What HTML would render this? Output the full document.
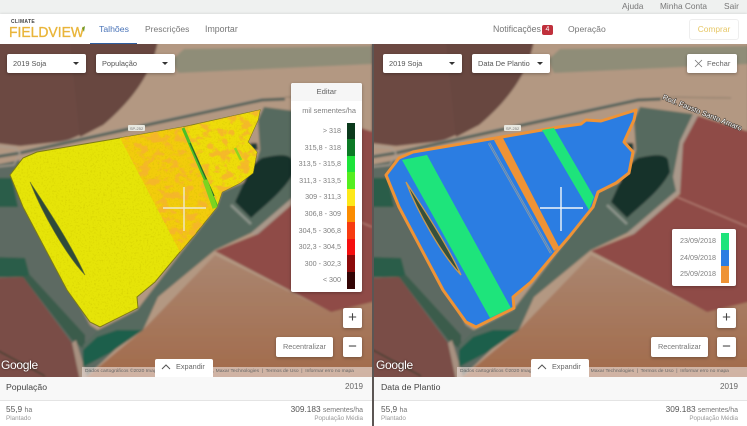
<!DOCTYPE html>
<html lang="pt"><head><meta charset="utf-8"><title>FieldView</title>
<style>
*{box-sizing:border-box}
html,body{margin:0;padding:0;width:747px;height:426px;overflow:hidden;background:#fff;font-family:"Liberation Sans",sans-serif;color:#666}
body{filter:blur(.3px)}
.a{position:absolute;white-space:nowrap}
.box{position:absolute;background:#fff;border-radius:2px;box-shadow:0 1px 3px rgba(0,0,0,.3)}
.sel{height:19px;top:54px;font-size:7.4px;line-height:19px;padding-left:6px;color:#555}
.sel i{position:absolute;right:7px;top:8px;width:0;height:0;border:3px solid transparent;border-top:3px solid #333;border-bottom:0}
.btn{text-align:center;color:#777;font-size:7.3px;line-height:20px;height:20px}
.pm{width:19px;font-size:15px;color:#444;line-height:19px}
.lab{position:absolute;right:21px;font-size:7.2px;color:#808080;line-height:10px}
.seg{position:absolute;width:8px;height:16.7px}
.attr{position:absolute;top:367px;height:10px;background:rgba(235,225,220,.62);font-size:4.9px;line-height:10px;color:#666;overflow:hidden;padding-left:3px}
.goog{position:absolute;top:358px;color:#fff;font-size:12px;letter-spacing:-.3px;text-shadow:0 0 2px rgba(0,0,0,.6)}
.exp{position:absolute;top:359px;width:58px;height:18px;background:#fff;border-radius:2px 2px 0 0;font-size:7.3px;color:#666;line-height:16px;padding-left:21px}
.exp svg{position:absolute;left:6px;top:5px}
.t1{font-size:8.7px;color:#444;top:382px}
.t1.y{font-size:8.1px;color:#666;top:382px}
.t2{font-size:8.3px;color:#555;top:404px}
.t2 small{font-size:7px;color:#777}
.t3{font-size:6.3px;color:#999;top:415px}
</style></head><body>

<!-- top strip -->
<div class="a" style="left:0;top:0;width:747px;height:14px;background:#eff1f0"></div>
<div class="a" style="left:622px;top:1px;font-size:8.4px;color:#777">Ajuda</div>
<div class="a" style="left:660px;top:1px;font-size:8.3px;color:#777">Minha Conta</div>
<div class="a" style="left:724px;top:1px;font-size:8.4px;color:#777">Sair</div>

<!-- nav -->
<div class="a" style="left:0;top:14px;width:747px;height:30px;background:#fff;box-shadow:0 -1px 2px rgba(0,0,0,.08)"></div>
<div class="a" style="left:11px;top:19px;font-size:5px;font-weight:bold;color:#444;letter-spacing:.3px">CLIMATE</div>
<svg class="a" style="left:8px;top:23px" width="80" height="17" viewBox="0 0 80 17">
<text x="1" y="14" font-family="Liberation Sans" font-size="15" fill="#e9b53a" stroke="#e9b53a" stroke-width=".35" textLength="75" lengthAdjust="spacingAndGlyphs">FIELDVIEW</text>
<path d="M74 5l3-2-1 6z" fill="#6f9a2c"/>
</svg>
<div class="a" style="left:99px;top:24px;font-size:8.7px;color:#4a74b8">Talhões</div>
<div class="a" style="left:90px;top:43px;width:47px;height:1.5px;background:#2f5e9e"></div>
<div class="a" style="left:145px;top:24px;font-size:8.5px;color:#777">Prescrições</div>
<div class="a" style="left:205px;top:24px;font-size:8.8px;color:#777">Importar</div>
<div class="a" style="left:493px;top:24px;font-size:8.8px;color:#777">Notificações</div>
<div class="a" style="left:542px;top:25px;width:11px;height:9.500px;border-radius:2px;background:#c0303c;color:#fff;font-size:7px;line-height:9.500px;text-align:center">4</div>
<div class="a" style="left:568px;top:24px;font-size:8.6px;color:#777">Operação</div>
<div class="a" style="left:689px;top:19px;width:50px;height:21px;border:1px solid #eee;border-radius:3px;text-align:center;font-size:8.4px;line-height:19px;color:#e6c766">Comprar</div>

<!-- maps -->
<svg class="a" style="left:0;top:44px" width="747" height="333" viewBox="0 44 747 333">
<defs>
<linearGradient id="tan" x1="0" y1="0" x2="0" y2="1"><stop offset="0" stop-color="#aa8670"/><stop offset="1" stop-color="#a26a4a"/></linearGradient>
<filter id="soft"><feGaussianBlur stdDeviation="1"/></filter>
<filter id="speck" x="0" y="0" width="100%" height="100%"><feTurbulence type="fractalNoise" baseFrequency=".55" numOctaves="2" seed="4"/><feColorMatrix values="0 0 0 0 .55  0 0 0 0 .5  0 0 0 0 0  0 0 0 3.2 -1.65"/></filter>
<filter id="speck2" x="0" y="0" width="100%" height="100%"><feTurbulence type="fractalNoise" baseFrequency=".1 .14" numOctaves="3" seed="9"/><feColorMatrix values="0 0 0 0 .92  0 0 0 0 .45  0 0 0 0 .03  0 0 0 6 -2.9"/></filter>
<clipPath id="fieldclip"><path d="M23 158L37 152 120 138 183 127 260 110 258 120 248 142 257 152 253 173 240 183 222 192 217 207 193 237 180 252 155 282 137 297 138 308 100 327 90 322 67 290 23 207 10 175Z"/></clipPath>
<clipPath id="eastclip"><path d="M120 138L183 127 260 110 258 120 248 142 257 152 253 173 240 183 222 192 217 207 193 237 180 252Z"/></clipPath>
<g id="bg">
<rect x="-5" y="40" width="385" height="340" fill="#b39882"/>
<!-- pivot circle -->
<path d="M-5 40L158 40C152 75 130 102 103 125L66 141 20 146 -5 143Z" fill="#6c4843"/>
<path d="M70 40L158 40C152 75 130 102 103 125L80 137Z" fill="#674641"/>
<!-- north field band -->
<path d="M172 60L184 49 372 46 372 64 178 73Z" fill="#8f8d78"/>
<path d="M372 44H380V132H372Z" fill="#6b3f38"/>
<!-- west vegetation -->
<path d="M-5 165L20 160 30 210 90 325 120 345 83 380 70 345 23 277 -5 278Z" fill="#5d6b62"/>
<path d="M-5 178L12 178 18 207 -5 207ZM-5 257L25 258 30 277 -5 277Z" fill="#2a5d49"/>
<path d="M23 277L30 275 85 335 85 350 72 340Z" fill="#3a5c4c"/>
<!-- SW red field -->
<path d="M-5 278L23 277 72 343 80 380 -5 380Z" fill="#7a4e46"/>
<path d="M-5 349L45 376" stroke="#2c3a2c" stroke-width="1.2" fill="none"/>
<path d="M72 343L80 380 88 380 76 340Z" fill="#a79180"/>
<!-- SE tan field -->
<path d="M215 255L143 330 83 380H380V285L331 312Z" fill="url(#tan)"/>
<!-- wet vegetation -->
<path d="M264 107L317 114 304 141 297 177 304 191 251 233 215 250 158 297 143 330 113 340 83 363 83 345 98 330 137 310 180 254 217 207 222 192 250 180 260 150 258 120Z" fill="#566a5e"/>
<path d="M143 330L110 353 83 367 83 350 97 337 117 330Z" fill="#1f5f4c"/>
<path d="M317 114L323 116 308 144 304 192 258 236 251 233 300 191 297 177 304 141Z" fill="#a9988a"/>
<!-- E red field -->
<path d="M322 116L380 134V300L331 312 215 251 258 234 304 194 307 144Z" fill="#8f4b47"/>
<path d="M301 197L372 227" stroke="#b8867a" stroke-width="1" fill="none"/>
<!-- pond -->
<path d="M252 165L262 158C275 155 290 153 292 160L294 172C285 190 265 205 251 218L235 202Z" fill="#16302c"/>
<path d="M250 143L257 143 258 150 251 150Z" fill="#1c3a34"/>
<path d="M231 205L251 224" stroke="#8d958c" stroke-width="2.5" fill="none"/>
<!-- road -->
<path d="M-5 157L20 153 133 128 262 100 285 99" stroke="#55625a" stroke-width="3" fill="none"/>
<path d="M-5 155L20 151 133 126 262 98" stroke="#a69a8c" stroke-width=".8" fill="none"/>
<path d="M285 97L355 98" stroke="#8a7a68" stroke-width="1" fill="none"/>
<path d="M-5 146L15 148 20 153 14 165 -5 167" stroke="#a99c90" stroke-width="1.4" fill="none"/>
</g>
</defs>

<!-- LEFT -->
<svg x="0" y="44" width="372" height="333" viewBox="0 44 372 333">
<g filter="url(#soft)"><use href="#bg"/></g>
<rect x="128" y="125" width="17" height="6" rx="1" fill="#e8e8e0"/>
<text x="136.500" y="130" font-size="4" fill="#777" text-anchor="middle">SP-252</text>
<path d="M23 158L37 152 120 138 183 127 260 110 258 120 248 142 257 152 253 173 240 183 222 192 217 207 193 237 180 252 155 282 137 297 138 308 100 327 90 322 67 290 23 207 10 175Z" fill="#e6e408" stroke="#7c7a18" stroke-width="1"/>
<g clip-path="url(#fieldclip)">
<path d="M120 138L183 127 217 207 180 252Z" fill="#f2cc0c"/>
<path d="M185 127L260 110 258 120 248 142 257 152 253 173 240 183 222 192 217 207Z" fill="#eedc0a"/>
<rect x="0" y="100" width="270" height="230" filter="url(#speck)" opacity=".35"/>
<rect x="115" y="105" width="150" height="150" filter="url(#speck2)" clip-path="url(#eastclip)" opacity=".85"/>
<path d="M183 128L217 207" stroke="#4ac028" stroke-width="3" fill="none"/>
<path d="M190 143L214 196" stroke="#2c6a2a" stroke-width="1.3" fill="none"/>
<path d="M205 180L215 208" stroke="#7bd420" stroke-width="5" fill="none"/>
<path d="M235 148L241 160" stroke="#8fd420" stroke-width="2.500" fill="none"/>
</g>
<path d="M30 182C45 205 70 242 85 275C66 255 42 213 30 182Z" fill="#2f4a3a" stroke="#6d7828" stroke-width=".6"/>
<path d="M163 208H206M184 187V231" stroke="#eee9cc" stroke-width="1.4" fill="none"/>
</svg>

<!-- RIGHT -->
<svg x="374" y="44" width="373" height="333" viewBox="-2 44 373 333">
<g filter="url(#soft)"><use href="#bg"/></g>
<rect x="128" y="125" width="17" height="6" rx="1" fill="#e8e8e0"/>
<text x="136.500" y="130" font-size="4" fill="#777" text-anchor="middle">SP-252</text>
<path d="M23 158L37 152 120 138 183 127 205 124 210 120 225 121 260 110 258 120 248 142 257 152 253 173 240 183 222 192 217 207 193 237 180 252 155 282 137 297 138 308 100 327 90 322 67 290 23 207 10 175Z" fill="#2b7de2" stroke="#ee9336" stroke-width="3" stroke-linejoin="round"/>
<path d="M26 160L51 155 135 308 114 318Z" fill="#1ee47b"/>
<path d="M166 130L178 128 218 197 213 210Z" fill="#1ee47b"/>
<path d="M118 140L127 138 183 247 178 251Z" fill="#ee9336"/>
<path d="M113 143L175 253" stroke="#8a9aa5" stroke-width="2.4" fill="none"/>
<path d="M113 143L175 253" stroke="#2b7de2" stroke-width=".6" fill="none"/>
<path d="M30 182C45 205 70 242 85 275C66 255 42 213 30 182Z" fill="#34503c" stroke="#c89a50" stroke-width="1.3"/>
<path d="M164 208H207M185 187V231" stroke="#f2f6fa" stroke-width="1.4" fill="none"/>
<text transform="translate(286 99) rotate(22)" font-size="7.4" fill="#fff" stroke="#2a2620" stroke-width="1.2" paint-order="stroke" stroke-opacity=".75">Rod. Fausto Santo Amaro</text>
</svg>
</svg>

<div class="a" style="left:372px;top:44px;width:2px;height:382px;background:#5c5654"></div>

<!-- left controls -->
<div class="box sel" style="left:7px;width:79px">2019 Soja<i></i></div>
<div class="box sel" style="left:96px;width:79px">População<i></i></div>
<div class="box" style="left:291px;top:83px;width:71px;height:209px;background:#fff">
 <div style="height:18px;background:#f6f6f6;text-align:center;font-size:7.7px;line-height:18px;color:#666;border-radius:2px 2px 0 0">Editar</div>
 <div class="a" style="right:6px;top:23px;font-size:7.4px;color:#808080">mil sementes/ha</div>
 <div class="lab" style="top:43px">&gt; 318</div>
 <div class="lab" style="top:59.600px">315,8 - 318</div>
 <div class="lab" style="top:76.200px">313,5 - 315,8</div>
 <div class="lab" style="top:92.800px">311,3 - 313,5</div>
 <div class="lab" style="top:109.400px">309 - 311,3</div>
 <div class="lab" style="top:126px">306,8 - 309</div>
 <div class="lab" style="top:142.600px">304,5 - 306,8</div>
 <div class="lab" style="top:159.200px">302,3 - 304,5</div>
 <div class="lab" style="top:175.800px">300 - 302,3</div>
 <div class="lab" style="top:192.400px">&lt; 300</div>
 <div class="seg" style="left:56px;top:39.500px;background:#0b3a1c"></div>
 <div class="seg" style="left:56px;top:56.100px;background:#0c7a25"></div>
 <div class="seg" style="left:56px;top:72.700px;background:#1ee33a"></div>
 <div class="seg" style="left:56px;top:89.300px;background:#55ee20"></div>
 <div class="seg" style="left:56px;top:105.900px;background:#fde81a"></div>
 <div class="seg" style="left:56px;top:122.500px;background:#fb8c00"></div>
 <div class="seg" style="left:56px;top:139.100px;background:#f73b10"></div>
 <div class="seg" style="left:56px;top:155.700px;background:#f50f0f"></div>
 <div class="seg" style="left:56px;top:172.300px;background:#8c0a0a"></div>
 <div class="seg" style="left:56px;top:188.900px;background:#330505"></div>
</div>
<div class="box btn pm" style="left:343px;top:308px">+</div>
<div class="box btn" style="left:276px;top:337px;width:57px">Recentralizar</div>
<div class="box btn pm" style="left:343px;top:337px;height:20px">−</div>
<div class="goog" style="left:1px">Google</div>
<div class="attr" style="left:82px;width:290px">Dados cartográficos ©2020 Imagens ©2020 CNES / Airbus, Maxar Technologies &nbsp;|&nbsp; Termos de Uso &nbsp;|&nbsp; Informar erro no mapa</div>
<div class="exp" style="left:155px"><svg width="10" height="6" viewBox="0 0 10 6"><path d="M1 5L5 1 9 5" stroke="#555" fill="none"/></svg>Expandir</div>

<!-- right controls -->
<div class="box sel" style="left:383px;width:79px">2019 Soja<i></i></div>
<div class="box sel" style="left:472px;width:78px">Data De Plantio<i></i></div>
<div class="box" style="left:687px;top:54px;width:50px;height:19px;font-size:7.5px;line-height:19px;color:#666;padding-left:20px">Fechar
 <svg class="a" style="left:7px;top:5px" width="9" height="9" viewBox="0 0 9 9"><path d="M1 1L8 8M8 1L1 8" stroke="#777" stroke-width=".8" fill="none"/></svg></div>
<div class="box" style="left:672px;top:229px;width:64px;height:57px">
 <div class="lab" style="right:20px;top:7px">23/09/2018</div>
 <div class="lab" style="right:20px;top:23.500px">24/09/2018</div>
 <div class="lab" style="right:20px;top:40px">25/09/2018</div>
 <div class="seg" style="left:49px;top:4px;height:16.500px;background:#1ee47b"></div>
 <div class="seg" style="left:49px;top:20.500px;height:16.500px;background:#2b7de2"></div>
 <div class="seg" style="left:49px;top:37px;height:16.500px;background:#ee9336"></div>
</div>
<div class="box btn pm" style="left:717px;top:308px">+</div>
<div class="box btn" style="left:651px;top:337px;width:57px">Recentralizar</div>
<div class="box btn pm" style="left:717px;top:337px;height:20px">−</div>
<div class="goog" style="left:376px">Google</div>
<div class="attr" style="left:457px;width:290px">Dados cartográficos ©2020 Imagens ©2020 CNES / Airbus, Maxar Technologies &nbsp;|&nbsp; Termos de Uso &nbsp;|&nbsp; Informar erro no mapa</div>
<div class="exp" style="left:531px"><svg width="10" height="6" viewBox="0 0 10 6"><path d="M1 5L5 1 9 5" stroke="#555" fill="none"/></svg>Expandir</div>

<!-- bottom panels -->
<div class="a" style="left:0;top:377px;width:372px;height:49px;background:#fff"><div style="height:24px;background:#f8f8f8;border-bottom:1px solid #e4e4e4"></div></div>
<div class="a" style="left:374px;top:377px;width:373px;height:49px;background:#fff"><div style="height:24px;background:#f8f8f8;border-bottom:1px solid #e4e4e4"></div></div>
<div class="a t1" style="left:6px">População</div>
<div class="a t1 y" style="right:384px">2019</div>
<div class="a t2" style="left:6px">55,9 <small>ha</small></div>
<div class="a t3" style="left:6px">Plantado</div>
<div class="a t2" style="right:384px">309.183 <small>sementes/ha</small></div>
<div class="a t3" style="right:384px">População Média</div>
<div class="a t1" style="left:381px">Data de Plantio</div>
<div class="a t1 y" style="right:9px">2019</div>
<div class="a t2" style="left:381px">55,9 <small>ha</small></div>
<div class="a t3" style="left:381px">Plantado</div>
<div class="a t2" style="right:9px">309.183 <small>sementes/ha</small></div>
<div class="a t3" style="right:9px">População Média</div>
</body></html>
